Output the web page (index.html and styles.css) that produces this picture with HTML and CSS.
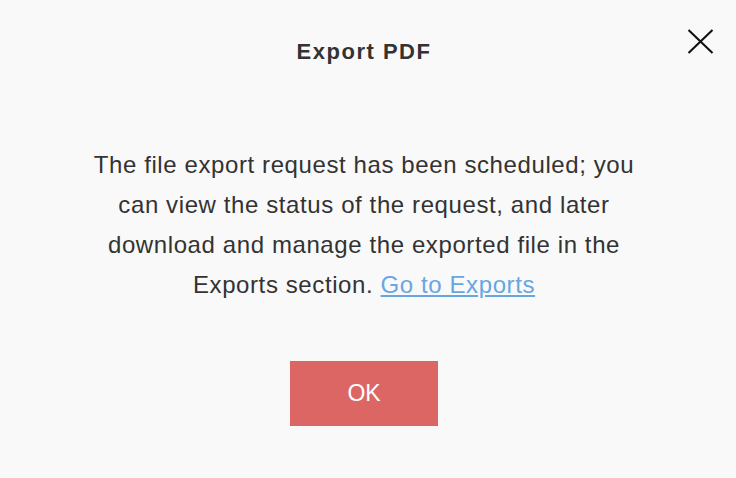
FILE: index.html
```html
<!DOCTYPE html>
<html lang="en">
<head>
<meta charset="utf-8">
<title>Export PDF</title>
<link rel="stylesheet" href="styles.css">
</head>
<body>
<div class="dialog">
  <header class="dialog-header">
    <h1 class="dialog-title">Export PDF</h1>
    <button class="close-btn" aria-label="Close">
      <svg width="27" height="25" viewBox="0 0 27 25"><path d="M1.5 1 L25.5 24 M25.5 1 L1.5 24" stroke="#111" stroke-width="2.1" fill="none"/></svg>
    </button>
  </header>
  <div class="dialog-body">
    <p class="message">The file export request has been scheduled; you can view the status of the request, and later download and manage the exported file in the Exports section. <a href="#" class="link">Go to Exports</a></p>
  </div>
  <footer class="dialog-footer">
    <button class="ok-btn">OK</button>
  </footer>
</div>
</body>
</html>
```
FILE: styles.css
```css
html, body {
  margin: 0;
  padding: 0;
  background: #f9f9f9;
}
body {
  font-family: "Liberation Sans", Arial, Helvetica, sans-serif;
  color: #333;
  width: 736px;
  height: 478px;
  overflow: hidden;
}
.dialog {
  position: relative;
  width: 728px;
  display: flex;
  flex-direction: column;
  align-items: center;
}
.dialog-header {
  width: 100%;
  padding-top: 38px;
  display: flex;
  justify-content: center;
}
.dialog-title {
  margin: 0;
  font-size: 22px;
  font-weight: bold;
  letter-spacing: 1.5px;
  line-height: 28px;
  color: #333;
}
.close-btn {
  position: absolute;
  top: 29px;
  left: 687px;
  width: 27px;
  height: 25px;
  padding: 0;
  border: 0;
  background: none;
  cursor: pointer;
}
.close-btn svg { display: block; }
.dialog-body {
  padding-top: 79px;
  width: 552px;
}
.message {
  margin: 0;
  font-size: 24px;
  letter-spacing: 0.6px;
  line-height: 40px;
  text-align: center;
}
.link {
  color: #67a6e3;
  text-decoration: underline;
}
.dialog-footer {
  padding-top: 56px;
}
.ok-btn {
  width: 148px;
  height: 65px;
  border: 0;
  border-radius: 0;
  background: #db6663;
  color: #fff;
  font-family: "Liberation Sans", Arial, sans-serif;
  font-size: 23px;
  cursor: pointer;
}
```
